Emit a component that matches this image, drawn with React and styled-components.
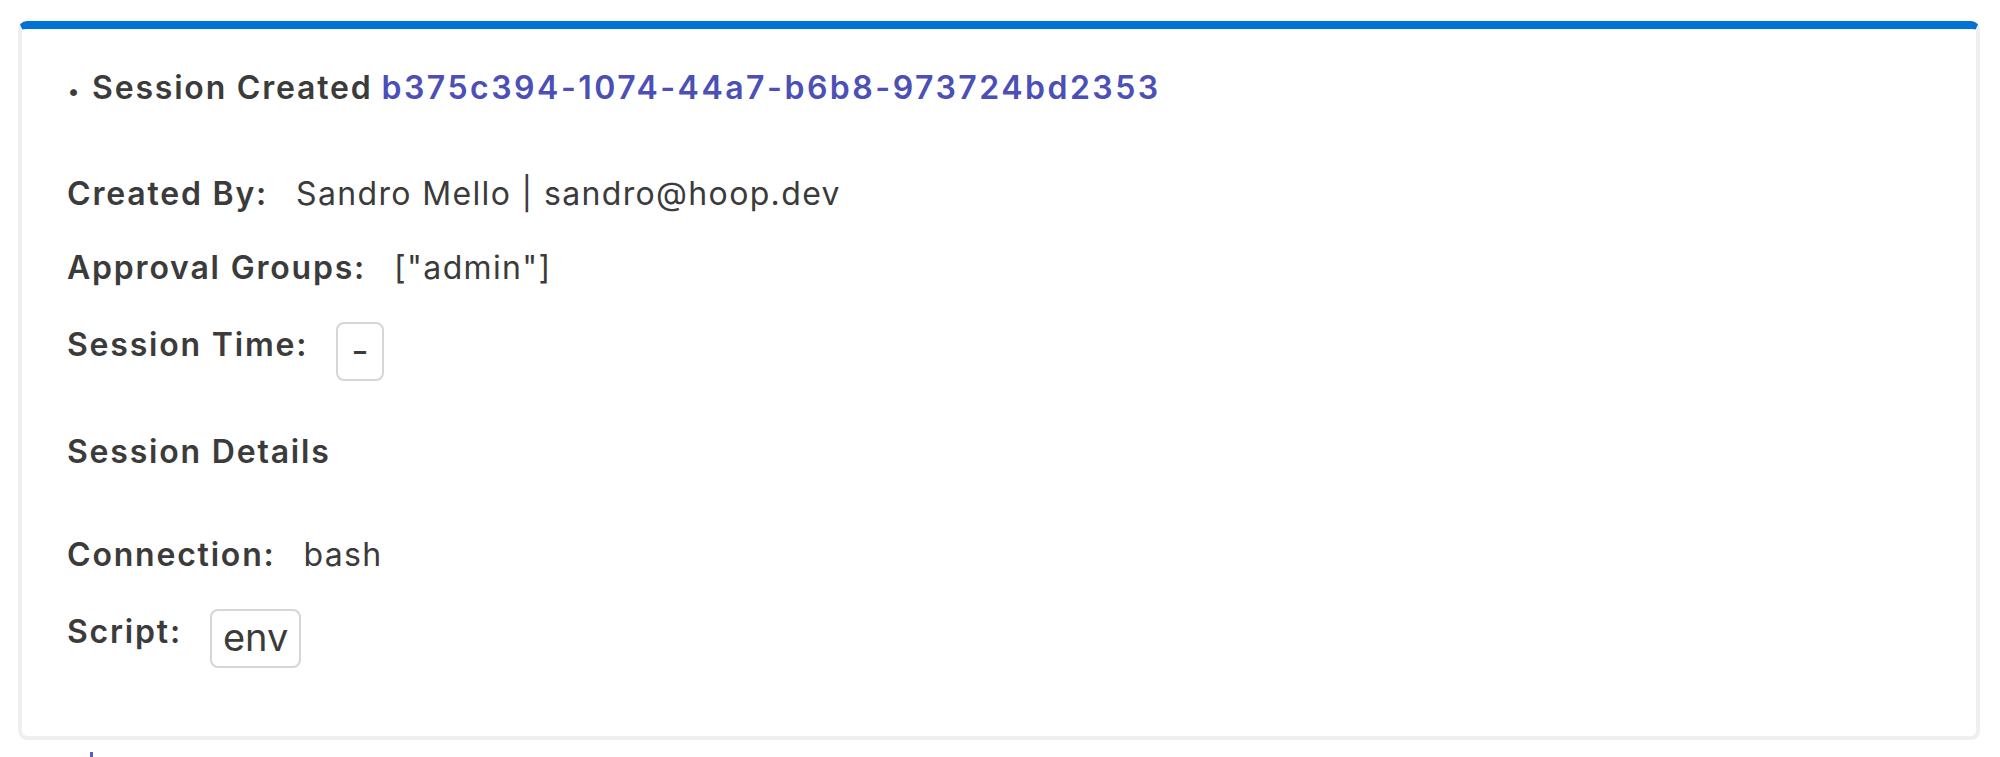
import React from "react";
import styled, { createGlobalStyle } from "styled-components";

const Global = createGlobalStyle`
  html, body { margin: 0; padding: 0; background: #ffffff; }
  body { font-family: Inter, "Noto Sans", "Liberation Sans", sans-serif; color: #3b3b3b; }
`;

const Page = styled.div`
  padding: 21px 20px 0 18px;
`;

const Card = styled.section`
  border: 4px solid #efefef;
  border-top: 8px solid #0073d5;
  border-radius: 9px;
  background: #ffffff;
  padding: 39px 40px 68px 45px;
`;

const Header = styled.h2`
  margin: 0;
  display: flex;
  align-items: baseline;
  font-size: 32px;
  line-height: 40px;
  font-weight: 600;
  letter-spacing: 1.8px;
  color: #3b3b3b;
`;

const Bullet = styled.span`
  font-size: 22px;
  letter-spacing: 0;
  margin: 0 13px 0 1px;
`;

const Id = styled.span`
  color: #4b4fb6;
  letter-spacing: 2.5px;
  margin-left: 9px;
`;

const Section = styled.div`
  display: flex;
  flex-direction: column;
  gap: 34px;
  margin-top: ${(p) => p.$top}px;
`;

const Row = styled.div`
  display: flex;
  align-items: flex-start;
  gap: 28px;
`;

const Label = styled.span`
  font-size: 32px;
  line-height: 40px;
  font-weight: 600;
  letter-spacing: 1.8px;
  color: #3b3b3b;
  margin-top: ${(p) => (p.$boxed ? 3 : 0)}px;
`;

const Value = styled.span`
  font-size: 32px;
  line-height: 40px;
  font-weight: 400;
  letter-spacing: 1.35px;
  color: #3b3b3b;
`;

const Chip = styled.span`
  display: inline-flex;
  align-items: center;
  justify-content: center;
  box-sizing: border-box;
  height: 59px;
  padding: 0 ${(p) => p.$pad}px 4px;
  border: 2px solid #d6d6d6;
  border-radius: 8px;
  font-size: 38px;
  line-height: 1;
  color: #3b3b3b;
`;

const Heading = styled.h3`
  margin: 0;
  font-size: 32px;
  line-height: 40px;
  font-weight: 600;
  letter-spacing: 1.8px;
  color: #3b3b3b;
`;

const Tail = styled.div`
  width: 3px;
  height: 6px;
  margin: 12px 0 0 72px;
  background: #5a5ec0;
`;

export default function App() {
  return (
    <>
      <Global />
      <Page>
        <Card>
          <Header>
            <Bullet>•</Bullet>
            Session Created
            <Id>b375c394-1074-44a7-b6b8-973724bd2353</Id>
          </Header>
          <Section $top={63}>
            <Row>
              <Label>Created By:</Label>
              <Value>Sandro Mello | sandro@hoop.dev</Value>
            </Row>
            <Row>
              <Label>Approval Groups:</Label>
              <Value>["admin"]</Value>
            </Row>
            <Row>
              <Label $boxed>Session Time:</Label>
              <Chip $pad={13}>-</Chip>
            </Row>
          </Section>
          <Section $top={51}>
            <Heading>Session Details</Heading>
          </Section>
          <Section $top={63}>
            <Row>
              <Label>Connection:</Label>
              <Value>bash</Value>
            </Row>
            <Row>
              <Label $boxed>Script:</Label>
              <Chip $pad={11}>env</Chip>
            </Row>
          </Section>
        </Card>
        <Tail />
      </Page>
    </>
  );
}
